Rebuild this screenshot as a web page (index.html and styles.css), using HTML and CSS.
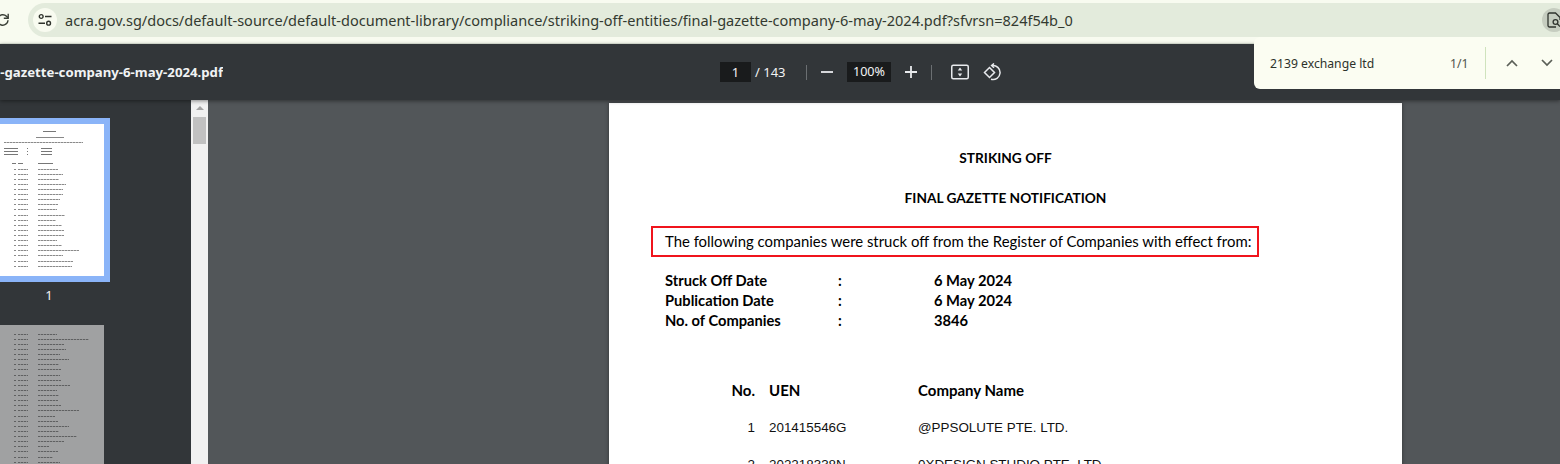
FILE: index.html
```html
<!DOCTYPE html>
<html lang="en">
<head>
  <meta charset="UTF-8">
  <meta name="viewport" content="width=device-width, initial-scale=1.0">
  <title>final-gazette-company-6-may-2024.pdf</title>
  <link rel="stylesheet" href="styles.css">
</head>
<body>
  <!-- Browser toolbar -->
  <header class="browser-bar">
    <svg class="reload-icon" width="16" height="16" viewBox="0 0 16 16" fill="none" stroke="#3b4038" stroke-width="1.5">
      <path d="M13 8.2a5.2 5.2 0 1 1-1.5-3.9L13 5.8"/>
      <path d="M13.2 1.8v4.4H8.8" stroke-width="1.4"/>
    </svg>
    <div class="omnibox">
      <span class="tune-chip">
        <svg width="14" height="14" viewBox="0 0 14 14" fill="none" stroke="#2f332d" stroke-width="1.4">
          <circle cx="3.2" cy="3.5" r="1.9"/>
          <path d="M7 3.5h6.5M.5 10.2h6.5"/>
          <circle cx="10.6" cy="10.2" r="1.9"/>
        </svg>
      </span>
      <span class="url">acra.gov.sg/docs/default-source/default-document-library/compliance/striking-off-entities/final-gazette-company-6-may-2024.pdf?sfvrsn=824f54b_0</span>
      <span class="lens-chip">
        <svg width="14" height="16" viewBox="0 0 14 16" fill="none" stroke="#2f332d" stroke-width="1.3">
          <path d="M9 15H2.5A1.5 1.5 0 0 1 1 13.5v-11A1.5 1.5 0 0 1 2.5 1h6L13 5.5V8"/>
          <circle cx="8.5" cy="10" r="2.4"/>
          <path d="M10.3 11.8 13 14.5"/>
        </svg>
      </span>
    </div>
  </header>

  <!-- PDF viewer toolbar -->
  <div class="pdf-bar">
    <div class="pdf-title"><span>final-gazette-company-6-may-2024.pdf</span></div>
    <div class="pdf-controls">
      <span class="page-box">1</span>
      <span class="page-count">/ 143</span>
      <span class="bar-sep sep-first"></span>
      <svg class="zoom-out" width="12" height="12" viewBox="0 0 12 12" stroke="#e8eaed" stroke-width="1.8"><path d="M0 6h12"/></svg>
      <span class="zoom-box">100%</span>
      <svg class="zoom-in" width="12" height="12" viewBox="0 0 12 12" stroke="#e8eaed" stroke-width="1.8"><path d="M0 6h12M6 0v12"/></svg>
      <span class="bar-sep sep-second"></span>
      <svg class="fit-icon" width="18" height="16" viewBox="0 0 18 16" fill="none" stroke="#e8eaed" stroke-width="1.5">
        <rect x=".75" y="1.25" width="16.5" height="13.5" rx="1.5"/>
        <path d="M9 3.6 6.8 6.4h4.4zM9 12.4 6.8 9.6h4.4z" fill="#e8eaed" stroke="none"/>
      </svg>
      <svg class="rotate-icon" width="18" height="18" viewBox="0 0 18 18" fill="none" stroke="#e8eaed" stroke-width="1.5">
        <path d="M1.5 9.5 6.5 4.5 11.5 9.5 6.5 14.5z"/>
        <path d="M9 2.6a7 7 0 1 1-1 13.6"/>
        <path d="M11 .5 8.6 2.6 11 4.8"/>
      </svg>
    </div>
  </div>

  <!-- Find in page -->
  <div class="find-bar">
    <span class="find-query">2139 exchange ltd</span>
    <span class="find-count">1/1</span>
    <span class="find-sep"></span>
    <svg class="find-up" width="12" height="8" viewBox="0 0 12 8" fill="none" stroke="#5a5f57" stroke-width="1.7"><path d="M1 7l5-5 5 5"/></svg>
    <svg class="find-down" width="12" height="8" viewBox="0 0 12 8" fill="none" stroke="#5a5f57" stroke-width="1.7"><path d="M1 1l5 5 5-5"/></svg>
  </div>

  <main class="viewer">
    <!-- Thumbnails -->
    <aside class="sidebar">
      <div class="thumb thumb-selected" id="thumb-first">
        <span class="thumb-line line-title"></span>
        <span class="thumb-line line-sub"></span>
        <span class="thumb-line line-long"></span>
        <div class="thumb-meta"><span></span><span></span><span></span></div>
        <div class="thumb-meta"><span></span><span></span><span></span></div>
        <div class="thumb-meta meta-last"><span></span><span></span><span></span></div>
        <div class="thumb-head"><span></span><span></span><span></span></div>
      </div>
      <div class="thumb-label">1</div>
      <div class="thumb thumb-dim" id="thumb-second"></div>
    </aside>

    <div class="scrollbar">
      <span class="scroll-arrow"></span>
      <span class="scroll-thumb"></span>
    </div>

    <!-- Document -->
    <section class="document">
      <article class="page">
        <h1 class="page-heading">STRIKING OFF</h1>
        <h2 class="page-heading page-subheading">FINAL GAZETTE NOTIFICATION</h2>
        <div class="highlight-box">The following companies were struck off from the Register of Companies with effect from:</div>
        <div class="meta-grid">
          <span>Struck Off Date</span><span>:</span><span>6 May 2024</span>
          <span>Publication Date</span><span>:</span><span>6 May 2024</span>
          <span>No. of Companies</span><span>:</span><span>3846</span>
        </div>
        <div class="company-table">
          <span class="col-no head">No.</span><span class="head">UEN</span><span class="head">Company Name</span>
          <span class="col-no">1</span><span>201415546G</span><span>@PPSOLUTE PTE. LTD.</span>
          <span class="col-no">2</span><span>202218338N</span><span>0XDESIGN STUDIO PTE. LTD.</span>
        </div>
      </article>
    </section>
  </main>

  <script src="thumbs.js"></script>
</body>
</html>
```

FILE: styles.css
```css
body {
  margin: 0;
  width: 1560px;
  height: 464px;
  overflow: hidden;
  position: relative;
  font-family: "Noto Sans", sans-serif;
  background: #323639;
}

/* browser toolbar */
.browser-bar {
  height: 44px;
  box-sizing: border-box;
  padding: 3px 0 0 28px;
  background: #f8fbf0;
  border-bottom: 1px solid #e6ecdf;
  position: relative;
}

.reload-icon {
  position: absolute;
  left: -5px;
  top: 12px;
}

.omnibox {
  height: 34px;
  display: flex;
  align-items: center;
  padding-left: 5px;
  background: #e3ebdc;
  border-radius: 17px 0 0 17px;
}

.tune-chip {
  width: 24px;
  height: 24px;
  border-radius: 50%;
  background: #f8fbf0;
  display: flex;
  align-items: center;
  justify-content: center;
  flex: none;
}

.url {
  margin-left: 8px;
  font-size: 14.52px;
  color: #333a30;
  white-space: nowrap;
  flex: 1;
}

.lens-chip {
  width: 24px;
  height: 24px;
  margin-right: -6px;
  border-radius: 50%;
  background: #c6cdc0;
  display: flex;
  align-items: center;
  flex: none;
  padding-left: 5px;
  box-sizing: border-box;
}

/* pdf toolbar */
.pdf-bar {
  height: 56px;
  display: flex;
  align-items: center;
  background: #323639;
  color: #f1f3f4;
  position: relative;
  box-shadow: 0 1px 4px rgba(0, 0, 0, 0.45);
  z-index: 1;
}

.pdf-title {
  width: 223px;
  flex: none;
  display: flex;
  justify-content: flex-end;
  overflow: hidden;
  white-space: nowrap;
  font-size: 13.2px;
  font-weight: 700;
}

.pdf-controls {
  display: flex;
  align-items: center;
  margin-left: 497px;
  font-size: 13px;
}

.page-box {
  width: 31px;
  height: 20px;
  line-height: 20px;
  text-align: center;
  background: #191b1c;
}

.page-count {
  margin-left: 4px;
  width: 30px;
  white-space: nowrap;
}

.bar-sep {
  width: 1px;
  height: 15px;
  background: #6b6f72;
}

.sep-first {
  margin-left: 21px;
}

.zoom-out {
  margin-left: 14px;
}

.zoom-box {
  width: 44px;
  height: 20px;
  line-height: 20px;
  margin-left: 14px;
  text-align: center;
  font-size: 12.6px;
  background: #191b1c;
}

.zoom-in {
  margin-left: 14px;
}

.sep-second {
  margin-left: 14px;
}

.fit-icon {
  margin-left: 19px;
}

.rotate-icon {
  margin-left: 14px;
}

/* find bar */
.find-bar {
  position: absolute;
  left: 1254px;
  top: 37px;
  width: 306px;
  height: 52px;
  display: flex;
  align-items: center;
  background: #fbfdf2;
  border-radius: 6px 0 0 6px;
  font-size: 12.2px;
  color: #2d322b;
  z-index: 2;
}

.find-query {
  margin-left: 16px;
  width: 180px;
  white-space: nowrap;
}

.find-count {
  width: 35px;
  color: #4f544c;
}

.find-sep {
  width: 1px;
  height: 32px;
  background: #cfe3bd;
}

.find-up {
  margin-left: 20px;
}

.find-down {
  margin-left: 23px;
}

/* viewer */
.viewer {
  height: 364px;
  display: flex;
  overflow: hidden;
  background: #525659;
}

.sidebar {
  width: 191px;
  flex: none;
  background: #323639;
  padding-top: 18px;
  box-sizing: border-box;
}

.thumb {
  width: 104px;
  background: #fff;
  overflow: hidden;
  box-sizing: border-box;
}

.thumb-selected {
  width: 110px;
  height: 164px;
  border: solid #8ab4f8;
  border-width: 6px 6px 6px 0;
  padding-top: 7px;
}

.thumb-label {
  width: 98px;
  margin-top: 5px;
  text-align: center;
  color: #f1f3f4;
  font-size: 13px;
  line-height: 17px;
}

.thumb-dim {
  height: 139px;
  margin-top: 21px;
  padding-top: 9px;
  background: #a0a1a2;
}

.thumb-line {
  display: block;
  height: 1px;
  margin-bottom: 4px;
  background: repeating-linear-gradient(90deg, #8a8a8a 0 2px, #c4c4c4 2px 3px);
  filter: blur(0.4px);
}

.line-title {
  width: 13px;
  margin-left: 43px;
  margin-bottom: 5px;
  background: #777;
}

.line-sub {
  width: 28px;
  margin-left: 36px;
  background: #888;
}

.line-long {
  width: 79px;
  margin-left: 4px;
  margin-bottom: 5px;
}

.thumb-meta {
  display: flex;
  height: 1px;
  margin: 0 0 2px 4px;
  filter: blur(0.4px);
}

.thumb-meta span {
  background: #777;
}

.thumb-meta span:nth-child(1) {
  width: 14px;
}

.thumb-meta span:nth-child(2) {
  width: 1px;
  margin-left: 9px;
}

.thumb-meta span:nth-child(3) {
  width: 11px;
  margin-left: 13px;
}

.meta-last {
  margin-bottom: 8px;
}

.thumb-head {
  display: flex;
  height: 1px;
  margin: 0 0 5px 12px;
  filter: blur(0.4px);
}

.thumb-head span {
  background: #777;
}

.thumb-head span:nth-child(1) {
  width: 4px;
}

.thumb-head span:nth-child(2) {
  width: 5px;
  margin-left: 2px;
}

.thumb-head span:nth-child(3) {
  width: 15px;
  margin-left: 15px;
}

.thumb-row {
  display: flex;
  height: 1px;
  margin-bottom: 4px;
  margin-left: 14px;
  filter: blur(0.4px);
}

.thumb-row span {
  background: repeating-linear-gradient(90deg, #8a8a8a 0 2px, #c4c4c4 2px 3px);
}

.thumb-dim .thumb-row span {
  background: repeating-linear-gradient(90deg, #5f6061 0 2px, #8a8b8c 2px 3px);
}

.thumb-row .cell-no {
  width: 2px;
}

.thumb-row .cell-uen {
  width: 10px;
  margin-left: 2px;
}

.thumb-row .cell-name {
  margin-left: 10px;
}

.thumb-row.group-end {
  margin-bottom: 5px;
}

.scrollbar {
  width: 17px;
  flex: none;
  background: #f1f1f1;
  position: relative;
}

.scroll-arrow {
  position: absolute;
  left: 5px;
  top: 6px;
  border: 4px solid transparent;
  border-top: 0;
  border-bottom: 4px solid #a3a3a3;
}

.scroll-thumb {
  position: absolute;
  left: 2px;
  top: 17px;
  width: 13px;
  height: 27px;
  background: #c1c1c1;
}

.document {
  flex: 1;
  padding: 3px 0 0 401px;
}

.page {
  width: 793px;
  height: 500px;
  box-sizing: border-box;
  padding-top: 45px;
  background: #fff;
  color: #000;
  font-family: Lato, sans-serif;
  font-size: 14.9px;
  box-shadow: 0 0 4px rgba(0, 0, 0, 0.4);
}

.page-heading {
  margin: 0;
  font-size: 13.7px;
  font-weight: 700;
  line-height: 20px;
  text-align: center;
}

.page-subheading {
  margin-top: 20px;
}

.highlight-box {
  margin: 18px 0 0 42px;
  width: 608px;
  height: 31px;
  box-sizing: border-box;
  padding-left: 12px;
  line-height: 26px;
  border: 2px solid #f0141c;
  white-space: nowrap;
}

.meta-grid {
  margin: 13px 0 0 56px;
  display: grid;
  grid-template-columns: 173px 96px auto;
  grid-auto-rows: 20px;
  line-height: 20px;
  font-size: 14.7px;
  font-weight: 700;
}

.company-table {
  margin: 50px 0 0 122px;
  display: grid;
  grid-template-columns: 24px 135px auto;
  grid-template-rows: 38px 37px 37px;
  column-gap: 14px;
  line-height: 20px;
  font-family: "Liberation Sans", sans-serif;
  font-size: 13.4px;
  color: #111;
}

.company-table .head {
  font-family: Lato, sans-serif;
  font-size: 15px;
  font-weight: 700;
  color: #000;
}

.col-no {
  text-align: right;
}
```

FILE: thumbs.js
```js
// widths of the name column in the two page thumbnails
const firstPage = [20, 25, 21, 28, 25, 25, 22, 20, 19, 27, 18, 24, 26, 26, 19, 24, 41, 25, 35, 34];
const secondPage = [19, 51, 26, 28, 22, 31, 21, 23, 22, 23, 32, 19, 21, 20, 23, 41, 17, 20, 31, 21, 39, 26, 11, 20, 15, 22];

function renderRows(id, widths, groupEvery) {
  const thumb = document.getElementById(id);
  widths.forEach((width, i) => {
    const row = document.createElement("div");
    row.className = (i + 1) % groupEvery === 0 ? "thumb-row group-end" : "thumb-row";
    row.innerHTML = `
      <span class="cell-no"></span>
      <span class="cell-uen"></span>
      <span class="cell-name" style="width: ${width}px"></span>
    `;
    thumb.appendChild(row);
  });
}

renderRows("thumb-first", firstPage, 9);
renderRows("thumb-second", secondPage, 8);
```
